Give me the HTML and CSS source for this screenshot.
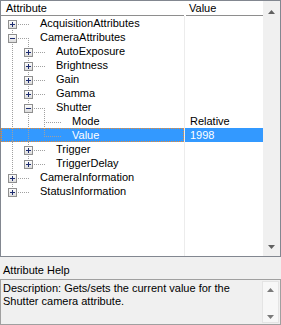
FILE: index.html
```html
<!DOCTYPE html>
<html lang="en">
<head>
    <meta charset="UTF-8">
    <title>Attributes</title>
    <link rel="stylesheet" href="styles.css">
</head>
<body>
    <div class="tree">
        <div class="tree-main">
            <div class="head">
                <div class="h-attr">Attribute</div>
                <div class="h-val">Value</div>
            </div>
            <div class="rows">
                <div class="row"><div class="attr l0">AcquisitionAttributes</div><div class="val"></div></div>
                <div class="row"><div class="attr l0">CameraAttributes</div><div class="val"></div></div>
                <div class="row"><div class="attr l1">AutoExposure</div><div class="val"></div></div>
                <div class="row"><div class="attr l1">Brightness</div><div class="val"></div></div>
                <div class="row"><div class="attr l1">Gain</div><div class="val"></div></div>
                <div class="row"><div class="attr l1">Gamma</div><div class="val"></div></div>
                <div class="row"><div class="attr l1">Shutter</div><div class="val"></div></div>
                <div class="row"><div class="attr l2">Mode</div><div class="val">Relative</div></div>
                <div class="row sel"><div class="attr l2">Value</div><div class="val">1998</div></div>
                <div class="row"><div class="attr l1">Trigger</div><div class="val"></div></div>
                <div class="row"><div class="attr l1">TriggerDelay</div><div class="val"></div></div>
                <div class="row"><div class="attr l0">CameraInformation</div><div class="val"></div></div>
                <div class="row"><div class="attr l0">StatusInformation</div><div class="val"></div></div>

                <!-- tree connector lines and expander boxes -->
                <svg class="lines" width="183" height="182" viewBox="0 0 183 182">
                    <defs>
                        <linearGradient id="boxfill" x1="0" y1="0" x2="0" y2="1">
                            <stop offset="0" stop-color="#ffffff"/>
                            <stop offset="1" stop-color="#dadada"/>
                        </linearGradient>
                        <g id="plus">
                            <rect x="0.5" y="0.5" width="8" height="8" fill="url(#boxfill)" stroke="#8f8f8f"/>
                            <path d="M2 4.5h5M4.5 2v5" stroke="#1d2c70"/>
                        </g>
                        <g id="minus">
                            <rect x="0.5" y="0.5" width="8" height="8" fill="url(#boxfill)" stroke="#8f8f8f"/>
                            <path d="M2 4.5h5" stroke="#1d2c70"/>
                        </g>
                    </defs>
                    <g stroke="#a0a0a0" stroke-dasharray="1 1" fill="none">
                        <path d="M11.5 8V176M27.5 22V148M43.5 92V120"/>
                        <path d="M11 8.5h17M11 22.5h17M11 162.5h17M11 176.5h17"/>
                        <path d="M27 36.5h17M27 50.5h17M27 64.5h17M27 78.5h17M27 92.5h17M27 134.5h17M27 148.5h17"/>
                        <path d="M43 106.5h17M43 120.5h17"/>
                    </g>
                    <use href="#plus" x="7" y="4"/>
                    <use href="#minus" x="7" y="18"/>
                    <use href="#plus" x="23" y="32"/>
                    <use href="#plus" x="23" y="46"/>
                    <use href="#plus" x="23" y="60"/>
                    <use href="#plus" x="23" y="74"/>
                    <use href="#minus" x="23" y="88"/>
                    <use href="#plus" x="23" y="130"/>
                    <use href="#plus" x="23" y="144"/>
                    <use href="#plus" x="7" y="158"/>
                    <use href="#plus" x="7" y="172"/>
                </svg>
            </div>
        </div>
        <div class="vscroll">
            <svg width="7" height="4"><path d="M3.5 0L7 4H0z" fill="#606060"/></svg>
            <svg width="7" height="4"><path d="M0 0H7L3.5 4z" fill="#606060"/></svg>
        </div>
    </div>

    <div class="help-title">Attribute Help</div>
    <div class="help">
        <p class="help-text">Description: Gets/sets the current value for the Shutter camera attribute.</p>
        <div class="help-scroll">
            <svg width="7" height="4"><path d="M3.5 0L7 4H0z" fill="#7a7a7a"/></svg>
            <svg width="7" height="4"><path d="M0 0H7L3.5 4z" fill="#7a7a7a"/></svg>
        </div>
    </div>
</body>
</html>
```

FILE: styles.css
```css
body {
    margin: 0;
    width: 281px;
    height: 325px;
    overflow: hidden;
    background: #f0f0f0;
    font-family: "Liberation Sans", Arial, sans-serif;
    font-size: 11px;
    color: #000;
}

.tree {
    display: flex;
    height: 257px;
    border: 1px solid #828790;
    box-sizing: border-box;
    background: #fff;
}

.tree-main {
    width: 262px;
    display: flex;
    flex-direction: column;
}

.head {
    display: flex;
    flex: none;
    height: 15px;
}

.h-attr, .h-val {
    border-bottom: 1px solid #8e8e8e;
    line-height: 14px;
    box-sizing: border-box;
}

.h-attr {
    width: 183px;
    padding-left: 5px;
}

.h-val {
    width: 77px;
    margin-left: 2px;
    padding-left: 3px;
}

.rows {
    position: relative;
    flex: 1;
    background: linear-gradient(to right, transparent 183px, #ececec 183px, #ececec 184px, transparent 184px);
}

.row {
    display: flex;
    height: 14px;
    line-height: 14px;
}

.attr {
    width: 183px;
    box-sizing: border-box;
    white-space: nowrap;
}

.l0 { padding-left: 39px; }
.l1 { padding-left: 55px; }
.l2 { padding-left: 71px; }

.val {
    width: 78px;
    margin-left: 1px;
    padding-left: 5px;
    box-sizing: border-box;
}

.sel .attr, .sel .val {
    background: #3399ff;
    color: #fff;
}

.sel .attr {
    outline: 1px dotted #ee8a2c;
    outline-offset: -1px;
}

.lines {
    position: absolute;
    top: 0;
    left: 0;
    pointer-events: none;
}

.vscroll {
    width: 17px;
    background: #f0f0f0;
    display: flex;
    flex-direction: column;
    justify-content: space-between;
    align-items: center;
    padding: 9px 0 7px;
    box-sizing: border-box;
}

.vscroll svg, .help-scroll svg {
    display: block;
}

.help-title {
    height: 22px;
    padding: 6px 0 0 3px;
    line-height: 14px;
    box-sizing: border-box;
}

.help {
    display: flex;
    height: 46px;
    border: 1px solid #a0a0a0;
    box-sizing: border-box;
}

.help-text {
    flex: 1;
    margin: 0;
    padding: 2px 0 0 2px;
    line-height: 13px;
}

.help-scroll {
    width: 17px;
    margin: 1px 1px 1px 0;
    background: #f7f7f7;
    border: 1px solid #e4e4e4;
    box-sizing: border-box;
    display: flex;
    flex-direction: column;
    justify-content: space-between;
    align-items: center;
    padding: 6px 0 3px;
}
```
